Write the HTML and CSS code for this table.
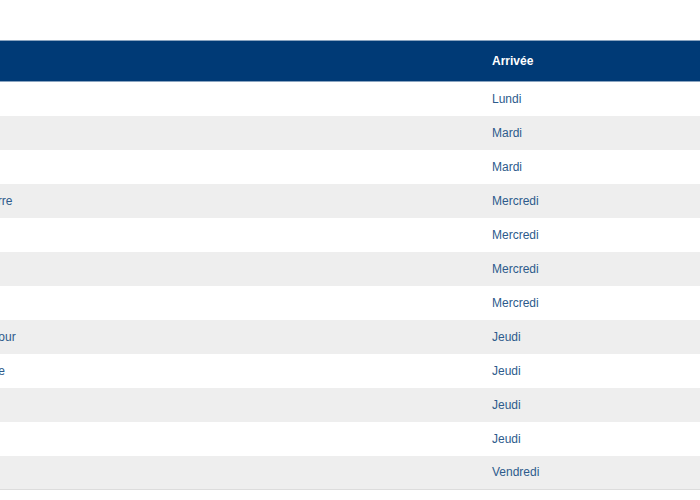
FILE: index.html
```html
<!DOCTYPE html>
<html lang="fr">
<head>
<meta charset="utf-8">
<title>Horaires</title>
<link rel="stylesheet" href="styles.css">
</head>
<body>
<div class="page">
  <table class="timetable">
    <thead>
      <tr><th class="c-dest">Ville</th><th class="c-arr">Arrivée</th></tr>
    </thead>
    <tbody>
      <tr><td class="c-dest">Paris</td><td class="c-arr">Lundi</td></tr>
      <tr><td class="c-dest">Lyon</td><td class="c-arr">Mardi</td></tr>
      <tr><td class="c-dest">Nantes</td><td class="c-arr">Mardi</td></tr>
      <tr><td class="c-dest">Saint-Pierre</td><td class="c-arr">Mercredi</td></tr>
      <tr><td class="c-dest">Lille</td><td class="c-arr">Mercredi</td></tr>
      <tr><td class="c-dest">Rennes</td><td class="c-arr">Mercredi</td></tr>
      <tr><td class="c-dest">Brest</td><td class="c-arr">Mercredi</td></tr>
      <tr><td class="c-dest">Saint-Amour</td><td class="c-arr">Jeudi</td></tr>
      <tr><td class="c-dest">Charleville</td><td class="c-arr">Jeudi</td></tr>
      <tr><td class="c-dest">Nancy</td><td class="c-arr">Jeudi</td></tr>
      <tr><td class="c-dest">Metz</td><td class="c-arr">Jeudi</td></tr>
      <tr><td class="c-dest">Caen</td><td class="c-arr">Vendredi</td></tr>
    </tbody>
  </table>
</div>
</body>
</html>
```
FILE: styles.css
```css
html, body {
  margin: 0;
  padding: 0;
  background: #ffffff;
}
.page {
  width: 700px;
  height: 500px;
  overflow: hidden;
  padding-top: 40px;
  box-sizing: border-box;
}
.timetable {
  margin-left: -63px;
  border-collapse: collapse;
  table-layout: fixed;
  width: 900px;
  font-family: "Liberation Sans", Arial, sans-serif;
  font-size: 12px;
  border-bottom: 1px solid #dcdcdc;
}
.timetable th {
  background: #003a76;
  color: #ffffff;
  font-weight: bold;
  text-align: left;
  height: 41px;
  padding: 0 12px;
  border-top: 1px solid #8aa4c0;
  border-bottom: 1px solid #8aa4c0;
  box-sizing: border-box;
}
.timetable th.c-arr {
  padding-left: 13px;
}
.timetable td {
  color: #2d5b8c;
  height: 34px;
  padding: 0 12px;
  white-space: nowrap;
  overflow: hidden;
}
.timetable td.c-arr {
  padding-left: 13px;
}
.timetable tbody tr:nth-child(even) td {
  background: #eeeeee;
}
.c-dest {
  width: 542px;
  box-sizing: border-box;
}
.c-arr {
  width: 358px;
  box-sizing: border-box;
}
```
